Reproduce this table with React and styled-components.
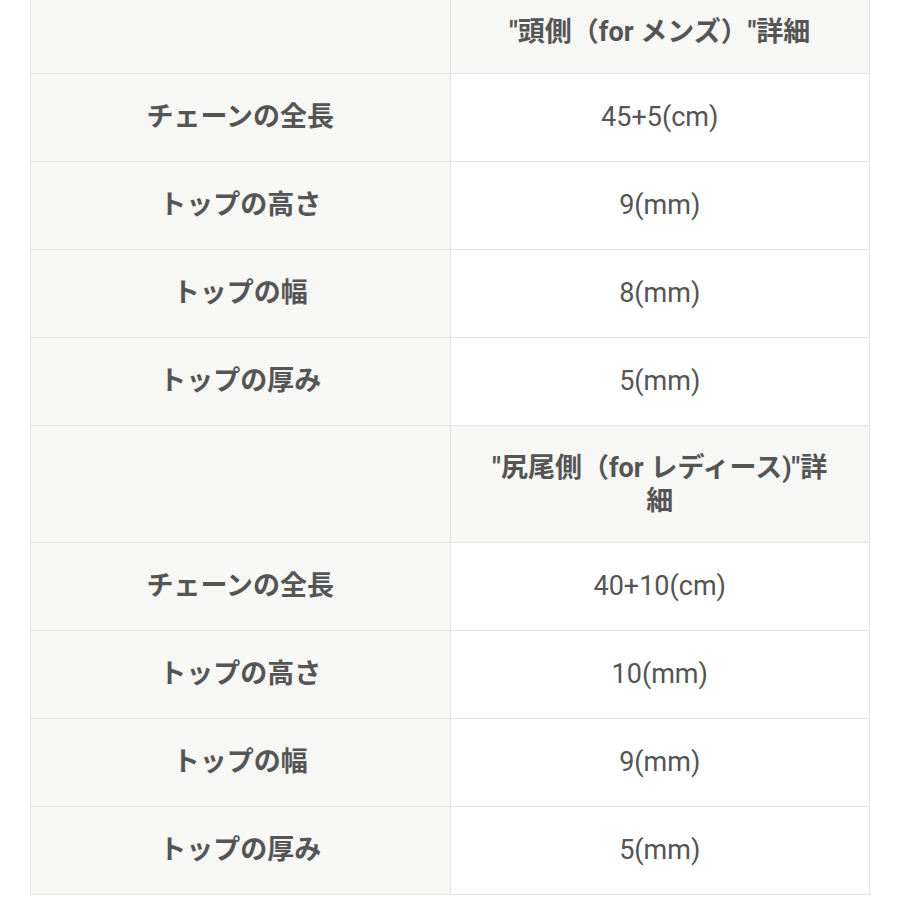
import React from "react";
import styled, {createGlobalStyle} from "styled-components";

const GlobalStyle = createGlobalStyle`
  body {
    margin: 0;
    background: #ffffff;
    font-family: Roboto, "Noto Sans CJK JP", sans-serif;
    color: #555555;
  }
`;

const Page = styled.div`
  padding: 0 30px 0 30px;
  margin-top: -11px;
`;

const SpecTable = styled.table`
  width: 840px;
  border-collapse: collapse;
  table-layout: fixed;
  font-size: 27px;
  line-height: 33px;
`;

const HeadCell = styled.th`
  background: #f7f7f5;
  border: 1px solid #e4e4e2;
  padding: 26px 30px 24px;
  font-weight: 700;
  text-align: center;
  vertical-align: middle;
`;

const LabelCell = styled.th`
  background: #f7f7f5;
  border: 1px solid #e4e4e2;
  padding: 27px 16px;
  font-weight: 700;
  text-align: center;
  vertical-align: middle;
`;

const ValueCell = styled.td`
  background: #ffffff;
  border: 1px solid #e4e4e2;
  padding: 27px 16px;
  font-weight: 400;
  text-align: center;
  vertical-align: middle;
`;

const sections = [
  {
    title: "\"頭側（for メンズ）\"詳細",
    rows: [
      ["チェーンの全長", "45+5(cm)"],
      ["トップの高さ", "9(mm)"],
      ["トップの幅", "8(mm)"],
      ["トップの厚み", "5(mm)"]
    ]
  },
  {
    title: "\"尻尾側（for レディース)\"詳細",
    rows: [
      ["チェーンの全長", "40+10(cm)"],
      ["トップの高さ", "10(mm)"],
      ["トップの幅", "9(mm)"],
      ["トップの厚み", "5(mm)"]
    ]
  }
];

const App = () => {
  return (
    <Page>
      <GlobalStyle />
      <SpecTable>
        <tbody>
          {sections.map((section, i) => (
            <React.Fragment key={i}>
              <tr>
                <HeadCell />
                <HeadCell>{section.title}</HeadCell>
              </tr>
              {section.rows.map(([label, value]) => (
                <tr key={label}>
                  <LabelCell>{label}</LabelCell>
                  <ValueCell>{value}</ValueCell>
                </tr>
              ))}
            </React.Fragment>
          ))}
        </tbody>
      </SpecTable>
    </Page>
  );
};

export default App;
